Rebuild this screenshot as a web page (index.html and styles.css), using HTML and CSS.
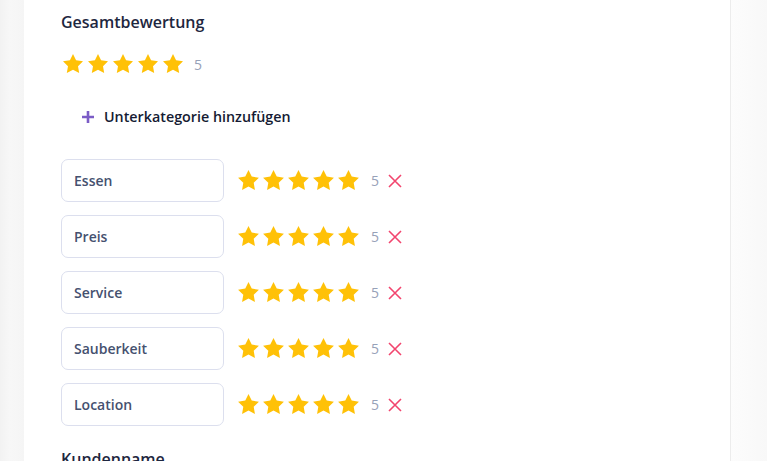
FILE: index.html
```html
<!DOCTYPE html>
<html lang="de">
<head>
<meta charset="utf-8">
<title>Bewertung</title>
<link rel="stylesheet" href="styles.css">
</head>
<body>
<div class="layout">
  <div class="gutter"></div>
  <main class="panel">
    <h2 class="title">Gesamtbewertung</h2>
    <div class="rating main-rating">
      <div class="stars">
        <svg class="star" viewBox="0 0 24 24"><path d="M12 2l3.09 6.26L22 9.27l-5 4.87 1.18 6.88L12 17.77l-6.18 3.25L7 14.14 2 9.27l6.91-1.01L12 2z"/></svg>
        <svg class="star" viewBox="0 0 24 24"><path d="M12 2l3.09 6.26L22 9.27l-5 4.87 1.18 6.88L12 17.77l-6.18 3.25L7 14.14 2 9.27l6.91-1.01L12 2z"/></svg>
        <svg class="star" viewBox="0 0 24 24"><path d="M12 2l3.09 6.26L22 9.27l-5 4.87 1.18 6.88L12 17.77l-6.18 3.25L7 14.14 2 9.27l6.91-1.01L12 2z"/></svg>
        <svg class="star" viewBox="0 0 24 24"><path d="M12 2l3.09 6.26L22 9.27l-5 4.87 1.18 6.88L12 17.77l-6.18 3.25L7 14.14 2 9.27l6.91-1.01L12 2z"/></svg>
        <svg class="star" viewBox="0 0 24 24"><path d="M12 2l3.09 6.26L22 9.27l-5 4.87 1.18 6.88L12 17.77l-6.18 3.25L7 14.14 2 9.27l6.91-1.01L12 2z"/></svg>
      </div>
      <span class="value">5</span>
    </div>
    <button class="add-btn" type="button">
      <svg class="plus" viewBox="0 0 14 14"><path d="M7 1v12M1 7h12"/></svg>
      <span>Unterkategorie hinzufügen</span>
    </button>
    <div class="subs">
      <div class="sub-row">
        <div class="field">Essen</div>
        <div class="stars">
          <svg class="star" viewBox="0 0 24 24"><path d="M12 2l3.09 6.26L22 9.27l-5 4.87 1.18 6.88L12 17.77l-6.18 3.25L7 14.14 2 9.27l6.91-1.01L12 2z"/></svg>
          <svg class="star" viewBox="0 0 24 24"><path d="M12 2l3.09 6.26L22 9.27l-5 4.87 1.18 6.88L12 17.77l-6.18 3.25L7 14.14 2 9.27l6.91-1.01L12 2z"/></svg>
          <svg class="star" viewBox="0 0 24 24"><path d="M12 2l3.09 6.26L22 9.27l-5 4.87 1.18 6.88L12 17.77l-6.18 3.25L7 14.14 2 9.27l6.91-1.01L12 2z"/></svg>
          <svg class="star" viewBox="0 0 24 24"><path d="M12 2l3.09 6.26L22 9.27l-5 4.87 1.18 6.88L12 17.77l-6.18 3.25L7 14.14 2 9.27l6.91-1.01L12 2z"/></svg>
          <svg class="star" viewBox="0 0 24 24"><path d="M12 2l3.09 6.26L22 9.27l-5 4.87 1.18 6.88L12 17.77l-6.18 3.25L7 14.14 2 9.27l6.91-1.01L12 2z"/></svg>
        </div>
        <span class="value">5</span>
        <svg class="remove" viewBox="0 0 14 14"><path d="M1 1l12 12M13 1L1 13"/></svg>
      </div>
      <div class="sub-row">
        <div class="field">Preis</div>
        <div class="stars">
          <svg class="star" viewBox="0 0 24 24"><path d="M12 2l3.09 6.26L22 9.27l-5 4.87 1.18 6.88L12 17.77l-6.18 3.25L7 14.14 2 9.27l6.91-1.01L12 2z"/></svg>
          <svg class="star" viewBox="0 0 24 24"><path d="M12 2l3.09 6.26L22 9.27l-5 4.87 1.18 6.88L12 17.77l-6.18 3.25L7 14.14 2 9.27l6.91-1.01L12 2z"/></svg>
          <svg class="star" viewBox="0 0 24 24"><path d="M12 2l3.09 6.26L22 9.27l-5 4.87 1.18 6.88L12 17.77l-6.18 3.25L7 14.14 2 9.27l6.91-1.01L12 2z"/></svg>
          <svg class="star" viewBox="0 0 24 24"><path d="M12 2l3.09 6.26L22 9.27l-5 4.87 1.18 6.88L12 17.77l-6.18 3.25L7 14.14 2 9.27l6.91-1.01L12 2z"/></svg>
          <svg class="star" viewBox="0 0 24 24"><path d="M12 2l3.09 6.26L22 9.27l-5 4.87 1.18 6.88L12 17.77l-6.18 3.25L7 14.14 2 9.27l6.91-1.01L12 2z"/></svg>
        </div>
        <span class="value">5</span>
        <svg class="remove" viewBox="0 0 14 14"><path d="M1 1l12 12M13 1L1 13"/></svg>
      </div>
      <div class="sub-row">
        <div class="field">Service</div>
        <div class="stars">
          <svg class="star" viewBox="0 0 24 24"><path d="M12 2l3.09 6.26L22 9.27l-5 4.87 1.18 6.88L12 17.77l-6.18 3.25L7 14.14 2 9.27l6.91-1.01L12 2z"/></svg>
          <svg class="star" viewBox="0 0 24 24"><path d="M12 2l3.09 6.26L22 9.27l-5 4.87 1.18 6.88L12 17.77l-6.18 3.25L7 14.14 2 9.27l6.91-1.01L12 2z"/></svg>
          <svg class="star" viewBox="0 0 24 24"><path d="M12 2l3.09 6.26L22 9.27l-5 4.87 1.18 6.88L12 17.77l-6.18 3.25L7 14.14 2 9.27l6.91-1.01L12 2z"/></svg>
          <svg class="star" viewBox="0 0 24 24"><path d="M12 2l3.09 6.26L22 9.27l-5 4.87 1.18 6.88L12 17.77l-6.18 3.25L7 14.14 2 9.27l6.91-1.01L12 2z"/></svg>
          <svg class="star" viewBox="0 0 24 24"><path d="M12 2l3.09 6.26L22 9.27l-5 4.87 1.18 6.88L12 17.77l-6.18 3.25L7 14.14 2 9.27l6.91-1.01L12 2z"/></svg>
        </div>
        <span class="value">5</span>
        <svg class="remove" viewBox="0 0 14 14"><path d="M1 1l12 12M13 1L1 13"/></svg>
      </div>
      <div class="sub-row">
        <div class="field">Sauberkeit</div>
        <div class="stars">
          <svg class="star" viewBox="0 0 24 24"><path d="M12 2l3.09 6.26L22 9.27l-5 4.87 1.18 6.88L12 17.77l-6.18 3.25L7 14.14 2 9.27l6.91-1.01L12 2z"/></svg>
          <svg class="star" viewBox="0 0 24 24"><path d="M12 2l3.09 6.26L22 9.27l-5 4.87 1.18 6.88L12 17.77l-6.18 3.25L7 14.14 2 9.27l6.91-1.01L12 2z"/></svg>
          <svg class="star" viewBox="0 0 24 24"><path d="M12 2l3.09 6.26L22 9.27l-5 4.87 1.18 6.88L12 17.77l-6.18 3.25L7 14.14 2 9.27l6.91-1.01L12 2z"/></svg>
          <svg class="star" viewBox="0 0 24 24"><path d="M12 2l3.09 6.26L22 9.27l-5 4.87 1.18 6.88L12 17.77l-6.18 3.25L7 14.14 2 9.27l6.91-1.01L12 2z"/></svg>
          <svg class="star" viewBox="0 0 24 24"><path d="M12 2l3.09 6.26L22 9.27l-5 4.87 1.18 6.88L12 17.77l-6.18 3.25L7 14.14 2 9.27l6.91-1.01L12 2z"/></svg>
        </div>
        <span class="value">5</span>
        <svg class="remove" viewBox="0 0 14 14"><path d="M1 1l12 12M13 1L1 13"/></svg>
      </div>
      <div class="sub-row">
        <div class="field">Location</div>
        <div class="stars">
          <svg class="star" viewBox="0 0 24 24"><path d="M12 2l3.09 6.26L22 9.27l-5 4.87 1.18 6.88L12 17.77l-6.18 3.25L7 14.14 2 9.27l6.91-1.01L12 2z"/></svg>
          <svg class="star" viewBox="0 0 24 24"><path d="M12 2l3.09 6.26L22 9.27l-5 4.87 1.18 6.88L12 17.77l-6.18 3.25L7 14.14 2 9.27l6.91-1.01L12 2z"/></svg>
          <svg class="star" viewBox="0 0 24 24"><path d="M12 2l3.09 6.26L22 9.27l-5 4.87 1.18 6.88L12 17.77l-6.18 3.25L7 14.14 2 9.27l6.91-1.01L12 2z"/></svg>
          <svg class="star" viewBox="0 0 24 24"><path d="M12 2l3.09 6.26L22 9.27l-5 4.87 1.18 6.88L12 17.77l-6.18 3.25L7 14.14 2 9.27l6.91-1.01L12 2z"/></svg>
          <svg class="star" viewBox="0 0 24 24"><path d="M12 2l3.09 6.26L22 9.27l-5 4.87 1.18 6.88L12 17.77l-6.18 3.25L7 14.14 2 9.27l6.91-1.01L12 2z"/></svg>
        </div>
        <span class="value">5</span>
        <svg class="remove" viewBox="0 0 14 14"><path d="M1 1l12 12M13 1L1 13"/></svg>
      </div>
    </div>
    <h2 class="title next">Kundenname</h2>
  </main>
  <div class="aside"></div>
</div>
</body>
</html>
```

FILE: styles.css
```css
html, body {
  margin: 0;
  padding: 0;
  height: 100%;
  overflow: hidden;
}
body {
  font-family: "Open Sans", "Noto Sans", "Liberation Sans", sans-serif;
  background: #fafafa;
}
.layout {
  display: flex;
  height: 461px;
}
.gutter {
  width: 24px;
  flex: none;
  background: linear-gradient(to right, #f2f2f2, #f7f7f7 40%, #f5f5f5);
}
.panel {
  width: 669px;
  flex: none;
  background: #fff;
  border-right: 1px solid #ececec;
  padding: 10px 0 0 37px;
  box-sizing: content-box;
}
.aside {
  flex: 1;
  background: linear-gradient(to right, #fcfcfc, #f8f8f8);
}
.title {
  margin: 0;
  font-size: 16px;
  line-height: 24px;
  font-weight: 600;
  color: #1e2740;
}
.title.next {
  margin-top: 21px;
}
.rating {
  display: flex;
  align-items: center;
}
.main-rating {
  margin-top: 18px;
}
.stars {
  display: flex;
  gap: 1px;
}
.star {
  width: 24px;
  height: 24px;
  fill: #ffc107;
  display: block;
}
.sub-row .star {
  width: 25px;
  height: 25px;
}
.sub-row .stars {
  gap: 0;
}
.value {
  font-size: 14px;
  color: #97a1b8;
  margin-left: 9px;
}
.add-btn {
  display: flex;
  align-items: center;
  gap: 9px;
  margin: 31px 0 0 20px;
  padding: 0;
  border: 0;
  background: none;
  font-family: inherit;
  font-size: 14.3px;
  font-weight: 600;
  color: #151b33;
  cursor: pointer;
}
.plus {
  width: 14px;
  height: 14px;
  stroke: #7b5cc6;
  stroke-width: 2.6;
  fill: none;
}
.subs {
  display: flex;
  flex-direction: column;
  gap: 13px;
  margin-top: 33px;
}
.sub-row {
  display: flex;
  align-items: center;
}
.field {
  width: 163px;
  height: 43px;
  box-sizing: border-box;
  border: 1px solid #dcdfee;
  border-radius: 7px;
  padding: 0 12px;
  display: flex;
  align-items: center;
  font-size: 14px;
  font-weight: 600;
  color: #45516f;
  margin-right: 12px;
}
.sub-row .value {
  margin-left: 10px;
}
.remove {
  width: 14px;
  height: 14px;
  margin-left: 9px;
  stroke: #f2456e;
  stroke-width: 1.6;
  fill: none;
}
```
